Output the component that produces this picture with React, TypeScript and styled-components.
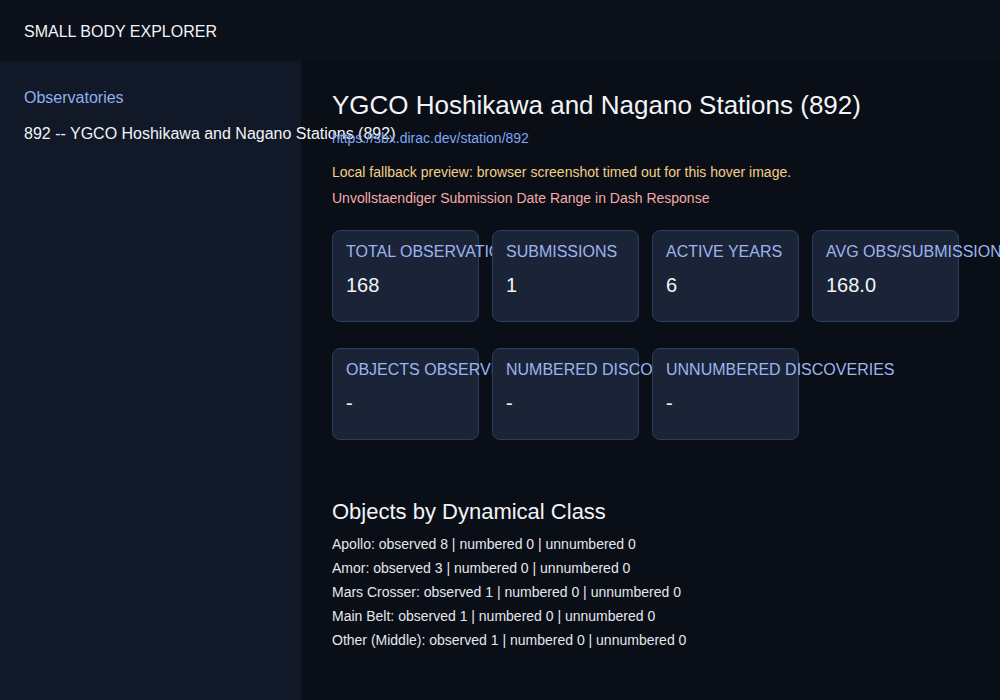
import React from "react";
import styled, { createGlobalStyle } from "styled-components";

const GlobalStyle = createGlobalStyle`
  html, body {
    margin: 0;
    padding: 0;
    background: #0a0e17;
    font-family: "Liberation Sans", Arial, sans-serif;
    color: #e5e7eb;
  }
  * { box-sizing: border-box; }
`;

const stats = [
  [
    { label: "Total Observations", value: "168" },
    { label: "Submissions", value: "1" },
    { label: "Active Years", value: "6" },
    { label: "Avg Obs/Submission", value: "168.0" },
  ],
  [
    { label: "Objects Observed", value: "-" },
    { label: "Numbered Discoveries", value: "-" },
    { label: "Unnumbered Discoveries", value: "-" },
  ],
];

const classes = [
  { name: "Apollo", observed: 8 },
  { name: "Amor", observed: 3 },
  { name: "Mars Crosser", observed: 1 },
  { name: "Main Belt", observed: 1 },
  { name: "Other (Middle)", observed: 1 },
];

const App: React.FC = () => {
  return (
    <Page>
      <GlobalStyle />
      <Header>SMALL BODY EXPLORER</Header>
      <Body>
        <Sidebar>
          <SidebarTitle>Observatories</SidebarTitle>
          <SidebarItem>892 -- YGCO Hoshikawa and Nagano Stations (892)</SidebarItem>
        </Sidebar>
        <Main>
          <Title>YGCO Hoshikawa and Nagano Stations (892)</Title>
          <StationLink href="#">https://sbx.dirac.dev/station/892</StationLink>
          <Notice tone="warn">
            Local fallback preview: browser screenshot timed out for this hover image.
          </Notice>
          <Notice tone="error">Unvollstaendiger Submission Date Range in Dash Response</Notice>

          {stats.map((row, i) => (
            <CardRow key={i}>
              {row.map((s) => (
                <Card key={s.label}>
                  <CardLabel>{s.label}</CardLabel>
                  <CardValue>{s.value}</CardValue>
                </Card>
              ))}
            </CardRow>
          ))}

          <SectionTitle>Objects by Dynamical Class</SectionTitle>
          {classes.map((c) => (
            <ClassLine key={c.name}>
              {c.name}: observed {c.observed} | numbered 0 | unnumbered 0
            </ClassLine>
          ))}
        </Main>
      </Body>
    </Page>
  );
};

const Page = styled.div`
  min-height: 700px;
  display: flex;
  flex-direction: column;
`;

const Header = styled.header`
  height: 61px;
  display: flex;
  align-items: center;
  padding: 3px 24px 0;
  background: #0b101b;
  font-size: 16px;
  color: #f3f4f6;
`;

const Body = styled.div`
  flex: 1;
  display: flex;
`;

const Sidebar = styled.aside`
  width: 301px;
  flex-shrink: 0;
  background: #111827;
  padding: 25px 24px 24px;
  min-height: 639px;
`;

const SidebarTitle = styled.div`
  font-size: 16px;
  line-height: 24px;
  color: #8fb0ee;
`;

const SidebarItem = styled.div`
  margin-top: 12px;
  font-size: 16px;
  line-height: 24px;
  color: #f3f4f6;
  white-space: nowrap;
`;

/* no background here, so the sidebar's overflowing label stays visible */
const Main = styled.main`
  flex: 1;
  padding: 29px 31px;
`;

const Title = styled.h1`
  margin: 0;
  font-size: 26px;
  line-height: 30px;
  font-weight: normal;
  color: #f3f4f6;
`;

const StationLink = styled.a`
  display: block;
  margin-top: 10px;
  font-size: 14px;
  line-height: 16px;
  color: #7fa6f5;
  text-decoration: none;
`;

const Notice = styled.div<{ tone: "warn" | "error" }>`
  font-size: 14px;
  line-height: 18px;
  margin-top: ${(p) => (p.tone === "warn" ? "17px" : "8px")};
  color: ${(p) => (p.tone === "warn" ? "#f4cf86" : "#f4abab")};
`;

const CardRow = styled.div`
  display: flex;
  gap: 13px;
  margin-top: 23px;

  & + & {
    margin-top: 26px;
  }
`;

const Card = styled.div`
  width: 147px;
  height: 92px;
  flex-shrink: 0;
  padding: 13px 13px;
  background: #1b2436;
  border: 1px solid #2a3f5f;
  border-radius: 8px;
`;

const CardLabel = styled.div`
  font-size: 16px;
  line-height: 16px;
  text-transform: uppercase;
  color: #9db4f0;
  white-space: nowrap;
`;

const CardValue = styled.div`
  margin-top: 13px;
  font-size: 20px;
  line-height: 24px;
  color: #f3f4f6;
`;

const SectionTitle = styled.h2`
  margin: 60px 0 8px;
  font-size: 22px;
  line-height: 24px;
  font-weight: normal;
  color: #f3f4f6;
`;

const ClassLine = styled.div`
  font-size: 14px;
  line-height: 24px;
  color: #e5e7eb;
`;

export default App;
